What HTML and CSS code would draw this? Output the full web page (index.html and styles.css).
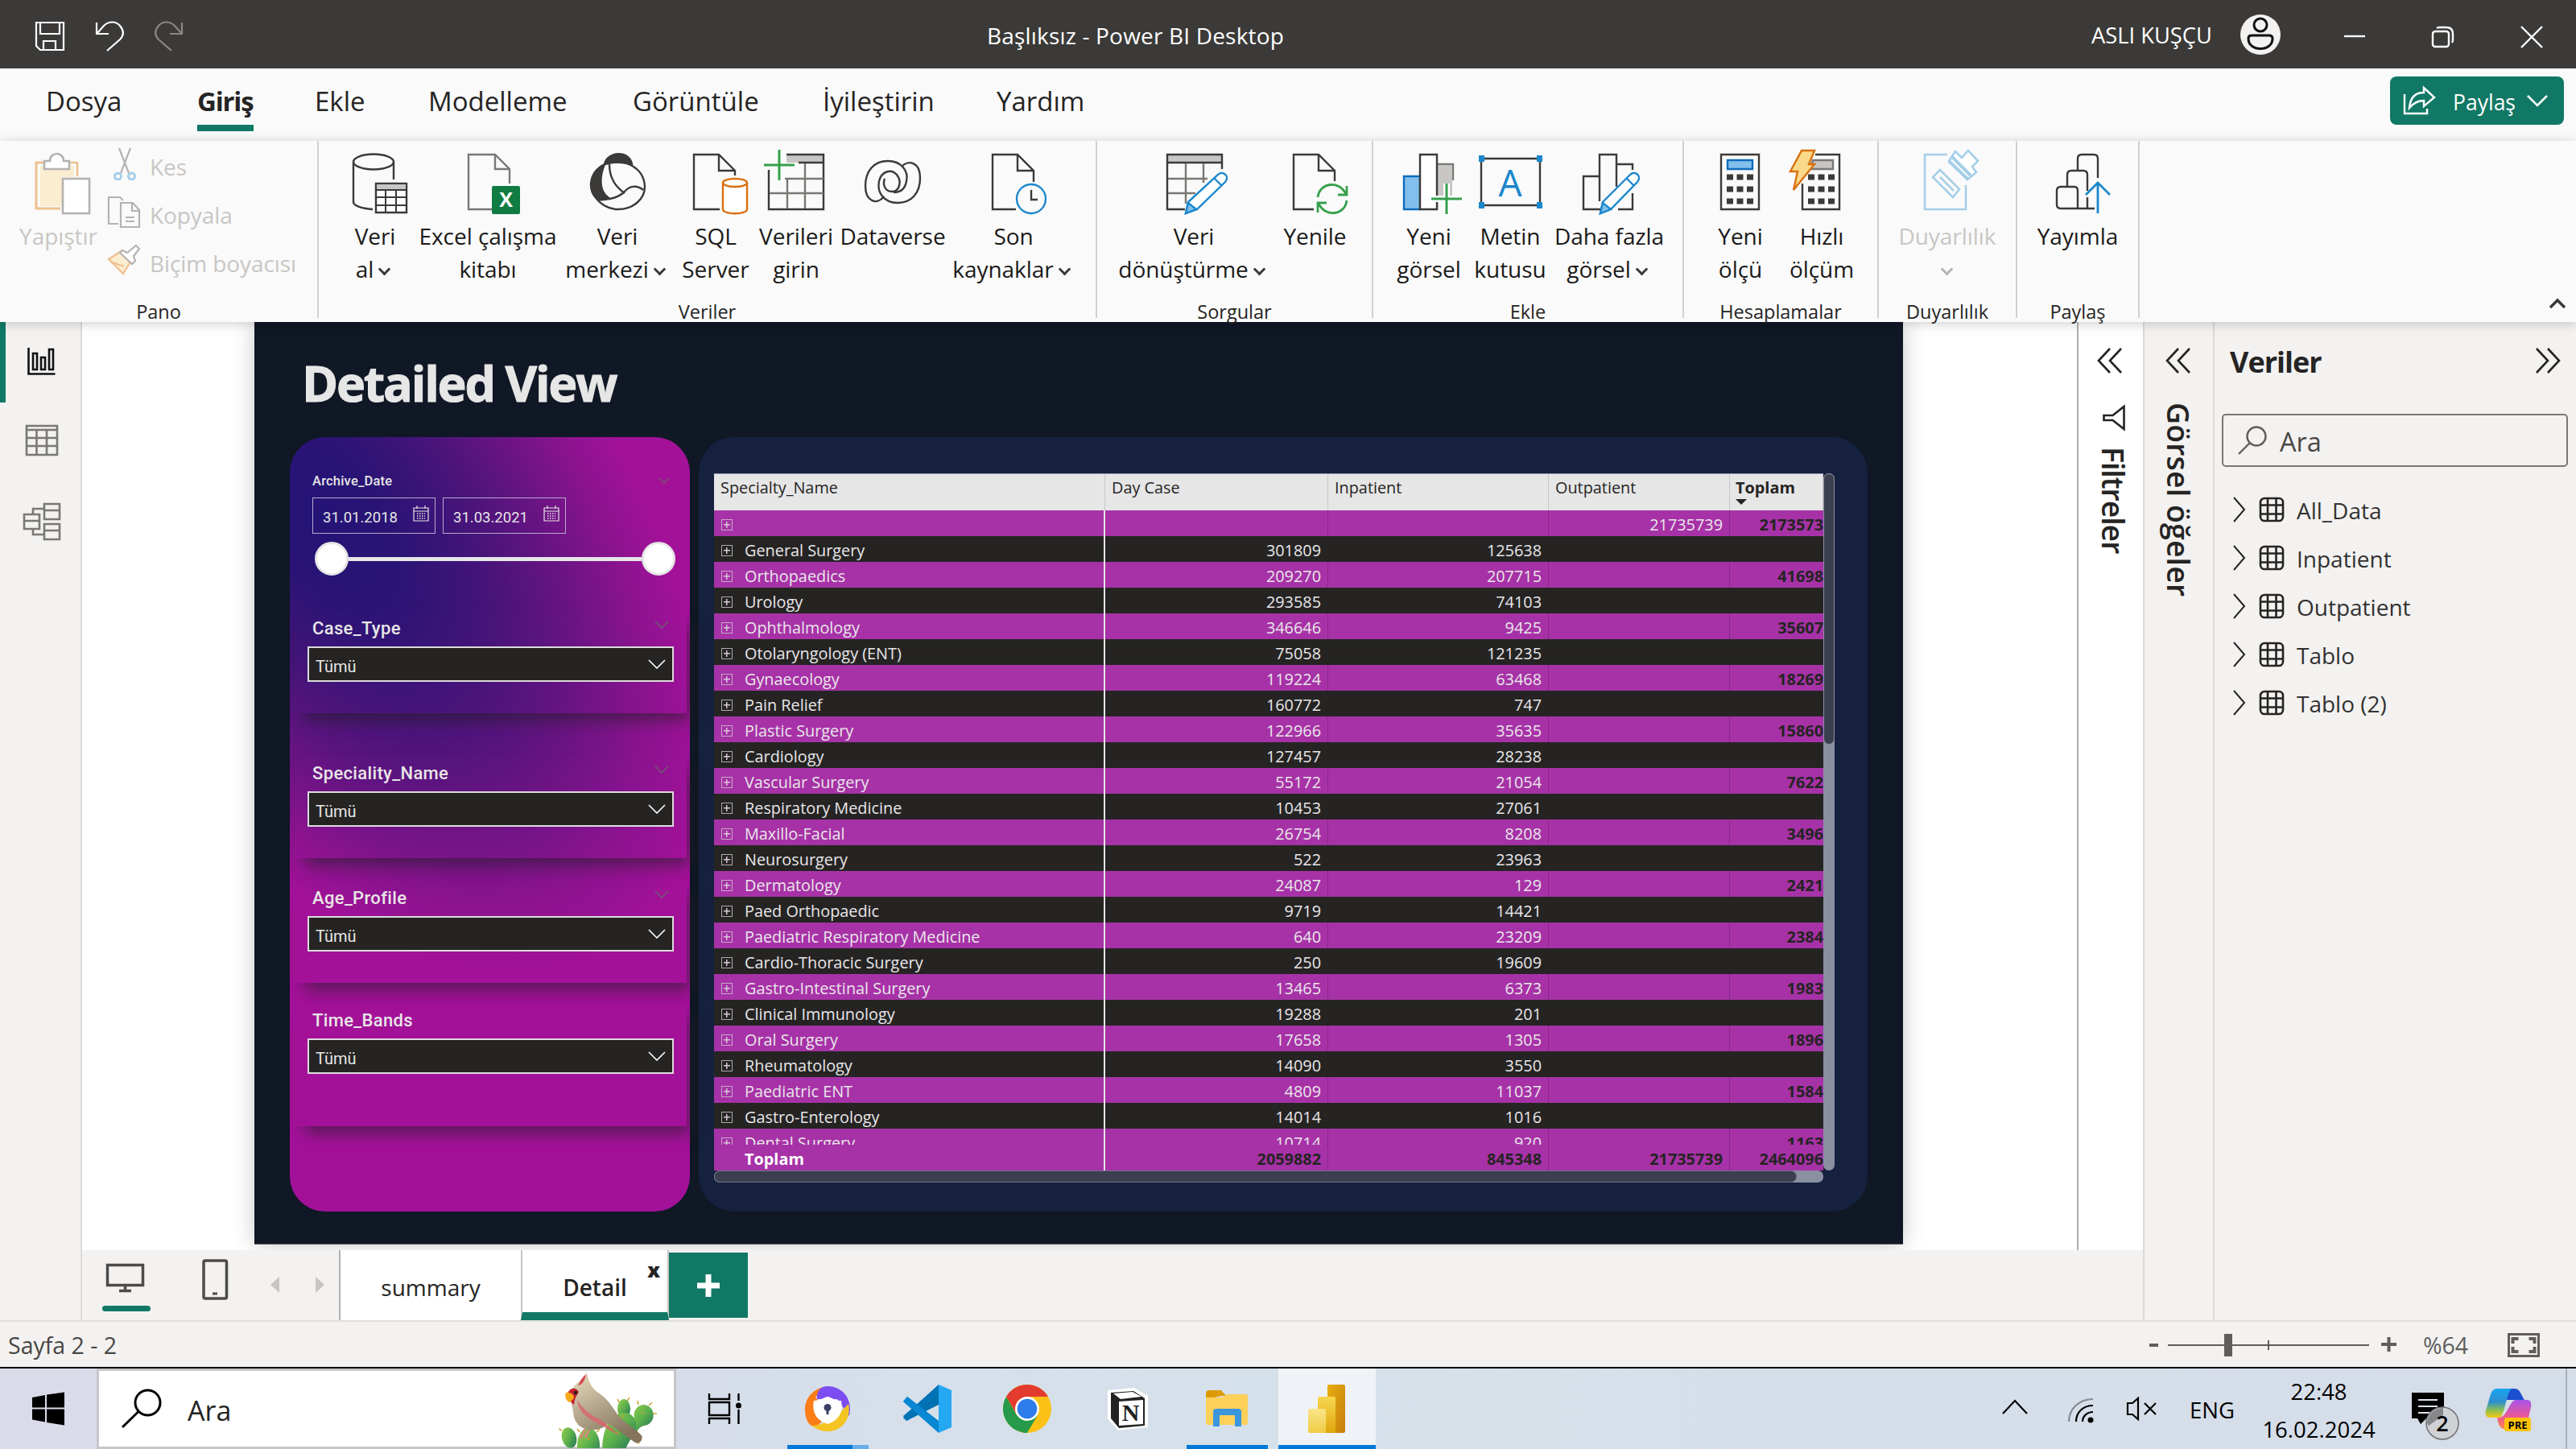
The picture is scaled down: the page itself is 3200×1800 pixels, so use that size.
FILE: index.html
```html
<!DOCTYPE html>
<html lang="tr">
<head>
<meta charset="utf-8">
<title>Başlıksız - Power BI Desktop</title>
<link rel="stylesheet" href="styles.css">
</head>
<body>
<header class="titlebar">
  <svg class="quick" width="250" height="85" viewBox="0 0 250 85" fill="none" stroke="#fff" stroke-width="2.2">
    <path d="M45 28h34v34H50l-5-5zM50 28v14h24V28M54 62V51h15v11M58 51"/>
    <path d="M120 28v14h15M121 41l8-9c6-6 15-6 20 0s5 12 0 17l-16 14"/>
    <path stroke="#8a8886" d="M226 28v14h-15M225 41l-8-9c-6-6-15-6-20 0s-5 12 0 17l16 14"/>
  </svg>
  <div class="doc">Başlıksız - Power BI Desktop</div>
  <div class="user">ASLI KUŞÇU</div>
  <svg class="wincontrols" width="420" height="85" viewBox="2780 0 420 85" fill="none" stroke="#fff" stroke-width="2.4">
    <circle cx="2808" cy="43" r="25" fill="#f3f2f1" stroke="none"/>
    <g stroke="#111" stroke-width="3"><circle cx="2808" cy="31" r="8"/><path d="M2797 44h22q4 0 4 4c0 8-7 12.500-15 12.500s-15-4.500-15-12.500q0-4 4-4z"/></g>
    <path d="M2912 45h26"/><rect x="3022" y="39" width="20" height="19" rx="3"/><path d="M3027 35q1-1 4-1h8q8 0 8 8v7q0 3-1 4"/><path d="M3132 33l26 26M3158 33l-26 26"/>
  </svg>
</header>

<nav class="menu">
  <span class="m1">Dosya</span><span class="m2 on">Giriş</span><span class="m3">Ekle</span><span class="m4">Modelleme</span><span class="m5">Görüntüle</span><span class="m6">İyileştirin</span><span class="m7">Yardım</span>
  <button class="share">
    <svg width="48" height="40" viewBox="2981 103 48 40" fill="none" stroke="#fff" stroke-width="2.400"><path d="M2987 115v24h28v-6M2993 132c1-12 7-19 18-19v-6l13 12-13 11v-7c-8 0-13 3-18 9z"/></svg>
    <span>Paylaş</span>
    <svg width="26" height="16" viewBox="0 0 26 16" fill="none" stroke="#fff" stroke-width="2.600"><path d="M1 2l12 12L25 2"/></svg>
  </button>
</nav>

<section class="ribbon">
  <div class="group g-pano">
    <div class="tools">
      <div class="cmd off paste">
        <svg width="105" height="92" viewBox="20 180 105 92" fill="none" stroke-width="2.600"><path d="M50 206h42v14H77v36H50z" fill="#faedd0"/><path d="M55 202H45v57h30" stroke="#f0c08e" stroke-width="3"/><path d="M86 202h10v17" stroke="#f0c08e"/><path d="M55 210v-10h7c0-12 17-12 17 0h7v10z" fill="#fff" stroke="#b5b3b1"/><rect x="78" y="222" width="33" height="43" fill="#fff" stroke="#b5b3b1"/></svg>
        <span>Yapıştır</span>
      </div>
      <div class="clip">
        <div><svg width="54" height="44" viewBox="124 180 54 44" fill="none" stroke="#b5b3b1" stroke-width="2.200"><path d="M147 184l12 31M161 184l-12 31"/><g stroke="#a5cfe8" stroke-width="3"><circle cx="145.500" cy="219" r="4"/><circle cx="162.500" cy="219" r="4"/></g></svg>Kes</div>
        <div><svg width="54" height="44" viewBox="125 241 54 44" fill="none" stroke="#b5b3b1" stroke-width="2.200"><path d="M147 279h-12v-33h14l4 4M150 253h15l8 9v21h-23zM164 253v10h9M156 271h11M156 276h11"/></svg>Kopyala</div>
        <div><svg width="54" height="44" viewBox="125 301 54 44" fill="none" stroke="#b5b3b1" stroke-width="2.200"><path d="M152 312l-17 11 18 18 11-18" fill="#faedd0" stroke="#f0c08e"/><path d="M137 326l17 6" stroke="#f0c08e"/><path d="M152 312l6 3 11-9 4 4-7 9 2 6-4 4-15-14z" fill="#fff"/></svg>Biçim boyacısı</div>
      </div>
    </div>
    <div class="glabel">Pano</div>
  </div>

  <div class="group g-veri">
    <div class="tools">
      <div class="cmd w100"><svg width="100" height="92" viewBox="416 180 100 92" fill="none" stroke="#3b3a39" stroke-width="2.400"><ellipse cx="464" cy="201" rx="25" ry="9.500"/><path d="M439 201v50c0 4 9 8 24 9M489 201v22"/><path d="M467 228h38v36h-38z" fill="#fff"/><path d="M468 229h36v6h-36z" fill="#c8c6c4" stroke="none"/><path d="M467 236h38M479 236v28M492 236v28M467 245h38M467 255h38" stroke-width="2"/></svg><span>Veri<br>al<i></i></span></div>
      <div class="cmd w180"><svg width="180" height="92" viewBox="516 180 180 92" fill="none" stroke="#7a7874" stroke-width="2.400"><path d="M611 260h-29v-68h33l18 18v18M615 192v18h18"/><rect x="611" y="231" width="35" height="35" rx="2" fill="#107c41" stroke="none"/><text x="628.500" y="257" text-anchor="middle" class="xl">X</text></svg><span>Excel çalışma<br>kitabı</span></div>
      <div class="cmd w142"><svg width="142" height="92" viewBox="696 180 142 92" fill="none" stroke="#3b3a39" stroke-width="2.400"><path d="M751 204c3-16 31-18 34 0-10-2-21-4-34 0zM751 204c-20 10-22 34-8 44 6 1 10 0 13-2-14-10-10-30-5-42z" fill="#3b3a39"/><path d="M751 204c22-9 49 3 50 28 0 14-13 28-33 28-13 0-25-8-30-18M757 204c0 18 8 28 19 36M743 247c14 2 25-2 32-8 6-8 16-10 24-3"/></svg><span>Veri<br>merkezi<i></i></span></div>
      <div class="cmd w102"><svg width="102" height="92" viewBox="838 180 102 92" fill="none" stroke="#3b3a39" stroke-width="2.400"><path d="M894 260h-32v-68h31l20 20v6M893 192v20h20"/><g stroke="#d8700f" fill="#fff"><path d="M898 227v33c0 7 30 7 30 0v-33"/><ellipse cx="913" cy="227" rx="15" ry="5"/></g></svg><span>SQL<br>Server</span></div>
      <div class="cmd w98"><svg width="98" height="92" viewBox="940 180 98 92" fill="none" stroke="#3b3a39" stroke-width="2.400"><path d="M977 192h46v10h-46z" fill="#c8c6c4" stroke="none"/><path d="M977 192h46v68h-68v-49M992 202h31"/><path stroke="#7a7874" d="M978 223v36M1000 203v56M975 222h48M956 240h67"/><path d="M968 186v38M949 205h38" stroke="#35a04c" stroke-width="3"/></svg><span>Verileri<br>girin</span></div>
      <div class="cmd w142"><svg width="142" height="92" viewBox="1038 180 142 92" fill="none" stroke="#3b3a39" stroke-width="2.400"><path d="M1120 207c8-9 23-6 23 14 0 18-10 31-28 31-17 0-26-13-23-27 3-12 15-16 22-8 7 9 3 21-6 21-8 0-12-8-9-16"/><path d="M1098 244c-8 11-23 7-23-13 0-18 10-31 28-31 17 0 26 13 23 25-2 12-10 14-16 14"/></svg><span>Dataverse</span></div>
      <div class="cmd w158"><svg width="158" height="92" viewBox="1180 180 158 92" fill="none" stroke="#3b3a39" stroke-width="2.400"><path d="M1262 260h-29v-68h31l20 20v14M1264 192v20h20"/><circle cx="1281" cy="247" r="18" stroke="#1b87cc"/><path d="M1281 236v12h8"/></svg><span>Son<br>kaynaklar<i></i></span></div>
    </div>
    <div class="glabel">Veriler</div>
  </div>

  <div class="group g-sorgu">
    <div class="tools">
      <div class="cmd w200"><svg width="200" height="92" viewBox="1383 180 200 92" fill="none" stroke="#3b3a39" stroke-width="2.400"><path d="M1450 192h68v10h-68z" fill="#c8c6c4"/><path d="M1450 202v58h22M1518 202v8"/><path stroke="#7a7874" d="M1473 203v50M1495 203v24M1451 222h49M1451 240h34"/><path d="M1473 265l3-14 37-34c6-6 15 2 9 9l-35 34z" fill="#fff" stroke="#1b87cc"/><path d="M1473 265l3-13 10 8zM1508 221l9 9" stroke="#1b87cc" fill="#83bfec"/></svg><span>Veri<br>dönüştürme<i></i></span></div>
      <div class="cmd w101"><svg width="101" height="92" viewBox="1583 180 101 92" fill="none" stroke="#3b3a39" stroke-width="2.400"><path d="M1632 260h-25v-68h31l20 20v13M1638 192v20h20"/><path d="M1637 245c2-18 26-22 35-4M1673 231v11h-11M1673 249c-2 18-26 22-35 4M1637 264v-12h11" stroke="#35a04c" stroke-width="2.800"/></svg><span>Yenile</span></div>
    </div>
    <div class="glabel">Sorgular</div>
  </div>

  <div class="group g-ekle">
    <div class="tools">
      <div class="cmd w104"><svg width="104" height="92" viewBox="1723 180 104 92" fill="none" stroke="#3b3a39" stroke-width="2.400"><path d="M1744 219h20v41h-20z" fill="#83bfec" stroke="#0f6cbd"/><path d="M1785 204h20v20M1785 204v56" fill="#c8c6c4" stroke="#7a7874"/><path d="M1786 205h18v38h-18z" fill="#c8c6c4" stroke="none"/><path d="M1764 192h21v68h-21z" fill="#fff"/><path d="M1797 228v38M1778 247h38" stroke="#fff" stroke-width="8"/><path d="M1797 228v38M1778 247h38" stroke="#35a04c" stroke-width="3"/></svg><span>Yeni<br>görsel</span></div>
      <div class="cmd w98"><svg width="98" height="92" viewBox="1827 180 98 92" fill="none" stroke="#3b3a39" stroke-width="2.400"><path d="M1840 197h73v58h-73z"/><path d="M1837 193h7v8h-7zM1909 193h7v8h-7zM1837 251h7v8h-7zM1909 251h7v8h-7z" fill="#1b87cc" stroke="none"/><text x="1876" y="244" text-anchor="middle" class="letterA">A</text></svg><span>Metin<br>kutusu</span></div>
      <div class="cmd w148"><svg width="148" height="92" viewBox="1925 180 148 92" fill="none" stroke="#3b3a39" stroke-width="2.400"><path d="M1990 260h-23v-41h20M1987 250v-58h21v40M2008 204h20v7M2028 240v20h-18"/><path d="M1988 265l3-14 34-34c6-6 15 2 9 9l-33 34z" fill="#fff" stroke="#1b87cc"/><path d="M1988 265l3-13 10 8zM2020 221l9 9" stroke="#1b87cc" fill="#83bfec"/></svg><span>Daha fazla<br>görsel<i></i></span></div>
    </div>
    <div class="glabel">Ekle</div>
  </div>

  <div class="group g-hesap">
    <div class="tools">
      <div class="cmd w100"><svg width="100" height="92" viewBox="2112 180 100 92" fill="none" stroke="#3b3a39" stroke-width="2.400"><path d="M2138 192h47v68h-47z"/><path d="M2146 199h31v11h-31z" fill="#83bfec" stroke="#0f6cbd"/><path d="M2145 220h34M2145 235h34M2145 250h34" stroke-width="7" stroke-dasharray="8 4.500"/></svg><span>Yeni<br>ölçü</span></div>
      <div class="cmd w102"><svg width="102" height="92" viewBox="2212 180 102 92" fill="none" stroke="#3b3a39" stroke-width="2.400"><path d="M2255 192h30v68h-46v-32"/><path d="M2252 199h25v11h-28z" fill="#c8c6c4" stroke="#7a7874"/><path d="M2246 220h34M2246 235h34M2246 250h34" stroke-width="7" stroke-dasharray="8 4.500"/><path d="M2238 187h16l-7 17h7l-26 32 5-23h-9z" fill="#fbd98b" stroke="#d8700f"/></svg><span>Hızlı<br>ölçüm</span></div>
    </div>
    <div class="glabel">Hesaplamalar</div>
  </div>

  <div class="group g-duy">
    <div class="tools">
      <div class="cmd off w170"><svg width="170" height="92" viewBox="2336 180 170 92" fill="none" stroke="#a5cfe8" stroke-width="2.600"><path d="M2421 192h-28v68h51v-30"/><path d="M2412 211l24 24-8 10-25-25zM2412 220l17 17"/><path d="M2423 200l8-12 8 8 8-9 12 13-7 7 5 7-11 9z" fill="#fff"/><path d="M2423 200l24 23M2427 195l23 23" stroke-width="4"/></svg><span>Duyarlılık<br><i></i></span></div>
    </div>
    <div class="glabel">Duyarlılık</div>
  </div>

  <div class="group g-pay">
    <div class="tools">
      <div class="cmd w150"><svg width="150" height="92" viewBox="2506 180 150 92" fill="none" stroke="#3b3a39" stroke-width="2.400"><path d="M2602 259h-42q-5 0-5-5v-17q0-5 5-5h17q4 0 4 5v22M2568 232v-15q0-5 5-5h15q5 0 5 5v20M2593 245v14M2581 211v-14q0-5 5-5h15q5 0 5 5v24"/><path d="M2606 265v-36M2591 242l15-15 15 15" stroke="#1b87cc" stroke-width="2.800"/></svg><span>Yayımla</span></div>
    </div>
    <div class="glabel">Paylaş</div>
  </div>
  <svg class="collapse" width="24" height="16" viewBox="0 0 24 16" fill="none" stroke="#3b3a39" stroke-width="3.500"><path d="M3 13l9-9 9 9"/></svg>
</section>

<main class="work">
  <aside class="rail">
    <svg width="101" height="290" viewBox="0 400 101 290" fill="none" stroke="#7a7874" stroke-width="2.600">
      <path d="M0 400h7v100H0z" fill="#117865" stroke="none"/>
      <g stroke="#111"><path d="M35.500 432v32.500h33"/><path d="M41 439h5v20h-5zM51 444h5v15h-5zM61 434h5v25h-5z"/></g>
      <path d="M33 529h38v36H33zM33 534h38M33 544h38M33 554h38M45.500 534v31M58 534v31"/>
      <path d="M55 626h19v19H55zM55 634h19M55 651h19v19H55zM55 659h19M30 639h19v18H30zM30 647h19M41 639v-7h14M41 657v7h14"/>
    </svg>
  </aside>

  <div class="center">
    <div class="upper">
      <div class="canvas">
        <div class="report">
          <h1>Detailed View</h1>
          <div class="panels">
            <div class="filters">
              <svg class="glow" width="497" height="962" viewBox="0 0 497 962">
                <defs><radialGradient id="glow" gradientUnits="userSpaceOnUse" cx="0" cy="0" r="1" gradientTransform="translate(40 97) rotate(-35) scale(360 650)"><stop offset="0" stop-color="#241476"/><stop offset=".2" stop-color="#2a1475"/><stop offset=".45" stop-color="#48147a"/><stop offset=".65" stop-color="#681483"/><stop offset=".85" stop-color="#8c1390"/><stop offset="1" stop-color="#a31199"/></radialGradient></defs>
                <rect width="497" height="962" rx="44" fill="url(#glow)"/>
              </svg>
              <div class="datebox">
                <div class="dhead"><span>Archive_Date</span><svg width="14" height="8" viewBox="0 0 14 8"><path d="M1 1l6 6 6-6" fill="none" stroke="#6b5f6b" stroke-width="1.400"/></svg></div>
                <div class="dates">
                  <div class="date"><span>31.01.2018</span><svg width="20" height="20" viewBox="0 0 20 20"><path d="M1 3h18v16H1zM1 7h18M5 0v4M15 0v4" fill="none" stroke="#e6e6e6" stroke-width="1.200"/><path d="M5 10h10M5 13h10M5 16h10" stroke="#e6e6e6" stroke-width="1.500" stroke-dasharray="1.500 1.500"/></svg></div>
                  <div class="date"><span>31.03.2021</span><svg width="20" height="20" viewBox="0 0 20 20"><path d="M1 3h18v16H1zM1 7h18M5 0v4M15 0v4" fill="none" stroke="#e6e6e6" stroke-width="1.200"/><path d="M5 10h10M5 13h10M5 16h10" stroke="#e6e6e6" stroke-width="1.500" stroke-dasharray="1.500 1.500"/></svg></div>
                </div>
                <div class="slider"><b></b><u></u><b></b></div>
              </div>
              <div class="slicer s1"><div class="shead"><span>Case_Type</span><svg width="18" height="10" viewBox="0 0 18 10"><path d="M1 1l8 8 8-8" fill="none" stroke="#6b5f6b" stroke-width="1.400"/></svg></div><div class="drop">Tümü<svg width="22" height="12" viewBox="0 0 22 12"><path d="M1 1l10 10L21 1" fill="none" stroke="#fff" stroke-width="1.600"/></svg></div></div>
              <div class="slicer s2"><div class="shead"><span>Speciality_Name</span><svg width="18" height="10" viewBox="0 0 18 10"><path d="M1 1l8 8 8-8" fill="none" stroke="#6b5f6b" stroke-width="1.400"/></svg></div><div class="drop">Tümü<svg width="22" height="12" viewBox="0 0 22 12"><path d="M1 1l10 10L21 1" fill="none" stroke="#fff" stroke-width="1.600"/></svg></div></div>
              <div class="slicer s3"><div class="shead"><span>Age_Profile</span><svg width="18" height="10" viewBox="0 0 18 10"><path d="M1 1l8 8 8-8" fill="none" stroke="#6b5f6b" stroke-width="1.400"/></svg></div><div class="drop">Tümü<svg width="22" height="12" viewBox="0 0 22 12"><path d="M1 1l10 10L21 1" fill="none" stroke="#fff" stroke-width="1.600"/></svg></div></div>
              <div class="slicer s4"><div class="shead"><span>Time_Bands</span></div><div class="drop">Tümü<svg width="22" height="12" viewBox="0 0 22 12"><path d="M1 1l10 10L21 1" fill="none" stroke="#fff" stroke-width="1.600"/></svg></div></div>
            </div>

            <div class="tablecard">
              <div class="matrixrow">
                <div class="matrix">
                  <div class="row head"><span>Specialty_Name</span><span>Day Case</span><span>Inpatient</span><span>Outpatient</span><span class="sorted">Toplam</span></div>
                  <div class="rows">
                    <div class="row"><span><i></i></span><span></span><span></span><span>21735739</span><span>2173573</span></div>
                    <div class="row"><span><i></i>General Surgery</span><span>301809</span><span>125638</span><span></span><span></span></div>
                    <div class="row"><span><i></i>Orthopaedics</span><span>209270</span><span>207715</span><span></span><span>41698</span></div>
                    <div class="row"><span><i></i>Urology</span><span>293585</span><span>74103</span><span></span><span></span></div>
                    <div class="row"><span><i></i>Ophthalmology</span><span>346646</span><span>9425</span><span></span><span>35607</span></div>
                    <div class="row"><span><i></i>Otolaryngology (ENT)</span><span>75058</span><span>121235</span><span></span><span></span></div>
                    <div class="row"><span><i></i>Gynaecology</span><span>119224</span><span>63468</span><span></span><span>18269</span></div>
                    <div class="row"><span><i></i>Pain Relief</span><span>160772</span><span>747</span><span></span><span></span></div>
                    <div class="row"><span><i></i>Plastic Surgery</span><span>122966</span><span>35635</span><span></span><span>15860</span></div>
                    <div class="row"><span><i></i>Cardiology</span><span>127457</span><span>28238</span><span></span><span></span></div>
                    <div class="row"><span><i></i>Vascular Surgery</span><span>55172</span><span>21054</span><span></span><span>7622</span></div>
                    <div class="row"><span><i></i>Respiratory Medicine</span><span>10453</span><span>27061</span><span></span><span></span></div>
                    <div class="row"><span><i></i>Maxillo-Facial</span><span>26754</span><span>8208</span><span></span><span>3496</span></div>
                    <div class="row"><span><i></i>Neurosurgery</span><span>522</span><span>23963</span><span></span><span></span></div>
                    <div class="row"><span><i></i>Dermatology</span><span>24087</span><span>129</span><span></span><span>2421</span></div>
                    <div class="row"><span><i></i>Paed Orthopaedic</span><span>9719</span><span>14421</span><span></span><span></span></div>
                    <div class="row"><span><i></i>Paediatric Respiratory Medicine</span><span>640</span><span>23209</span><span></span><span>2384</span></div>
                    <div class="row"><span><i></i>Cardio-Thoracic Surgery</span><span>250</span><span>19609</span><span></span><span></span></div>
                    <div class="row"><span><i></i>Gastro-Intestinal Surgery</span><span>13465</span><span>6373</span><span></span><span>1983</span></div>
                    <div class="row"><span><i></i>Clinical Immunology</span><span>19288</span><span>201</span><span></span><span></span></div>
                    <div class="row"><span><i></i>Oral Surgery</span><span>17658</span><span>1305</span><span></span><span>1896</span></div>
                    <div class="row"><span><i></i>Rheumatology</span><span>14090</span><span>3550</span><span></span><span></span></div>
                    <div class="row"><span><i></i>Paediatric ENT</span><span>4809</span><span>11037</span><span></span><span>1584</span></div>
                    <div class="row"><span><i></i>Gastro-Enterology</span><span>14014</span><span>1016</span><span></span><span></span></div>
                    <div class="row"><span><i></i>Dental Surgery</span><span>10714</span><span>920</span><span></span><span>1163</span></div>
                  </div>
                  <div class="row total"><span>Toplam</span><span>2059882</span><span>845348</span><span>21735739</span><span>2464096</span></div>
                </div>
                <div class="vbar"><b></b></div>
              </div>
              <div class="hbar"><b></b></div>
            </div>
          </div>
        </div>
      </div>
      <aside class="filterpane">
        <svg width="80" height="150" viewBox="2582 400 80 150" fill="none" stroke="#252423" stroke-width="2.600"><path d="M2621 433l-14 15 14 15M2635 433l-14 15 14 15"/><path d="M2638.500 505v28l-14-11h-11v-6h11z"/></svg>
        <span>Filtreler</span>
      </aside>
    </div>
    <div class="pages">
      <svg width="319" height="87" viewBox="102 1553 319 87" fill="none" stroke="#4d4b49" stroke-width="3.500">
        <path d="M133.500 1571.500h44v25h-44z"/><path d="M155.500 1598v5M148 1603.500h15"/><rect x="253" y="1566" width="28.500" height="47" rx="2"/><path d="M264 1607h6" stroke-width="3"/>
        <rect x="127" y="1622" width="60" height="7" rx="3.500" fill="#117865" stroke="none"/>
        <path d="M347 1586v20l-11-10zM392 1586v20l11-10z" fill="#c8c6c4" stroke="none"/>
      </svg>
      <div class="ptab">summary</div>
      <div class="ptab on">Detail<b>x</b></div>
      <div class="padd"><svg width="28" height="28" viewBox="0 0 28 28"><path d="M14 0v28M0 14h28" stroke="#fff" stroke-width="7"/></svg></div>
    </div>
  </div>

  <aside class="vizpane">
    <svg width="85" height="100" viewBox="2664 400 85 100" fill="none" stroke="#252423" stroke-width="2.600"><path d="M2706 433l-14 15 14 15M2720 433l-14 15 14 15"/></svg>
    <span>Görsel öğeler</span>
  </aside>

  <aside class="datapane">
    <div class="dtitle"><span>Veriler</span><svg width="32" height="32" viewBox="0 0 32 32" fill="none" stroke="#252423" stroke-width="2.600"><path d="M2 1l14 15L2 31M16 1l14 15-14 15"/></svg></div>
    <div class="search"><svg width="38" height="38" viewBox="0 0 38 38" fill="none" stroke="#605e5c" stroke-width="2.400"><circle cx="24" cy="14" r="11.500"/><path d="M16 22L2 36"/></svg>Ara</div>
    <div class="field"><svg width="66" height="32" viewBox="0 0 66 32" fill="none" stroke="#252423" stroke-width="2"><path d="M2 1l13 15L2 31"/><g stroke-width="2.600"><rect x="35" y="2" width="28" height="28" rx="5"/><path d="M35 10.500h28M35 21.500h28M44 2v28M54.500 2v28"/></g></svg>All_Data</div>
    <div class="field"><svg width="66" height="32" viewBox="0 0 66 32" fill="none" stroke="#252423" stroke-width="2"><path d="M2 1l13 15L2 31"/><g stroke-width="2.600"><rect x="35" y="2" width="28" height="28" rx="5"/><path d="M35 10.500h28M35 21.500h28M44 2v28M54.500 2v28"/></g></svg>Inpatient</div>
    <div class="field"><svg width="66" height="32" viewBox="0 0 66 32" fill="none" stroke="#252423" stroke-width="2"><path d="M2 1l13 15L2 31"/><g stroke-width="2.600"><rect x="35" y="2" width="28" height="28" rx="5"/><path d="M35 10.500h28M35 21.500h28M44 2v28M54.500 2v28"/></g></svg>Outpatient</div>
    <div class="field"><svg width="66" height="32" viewBox="0 0 66 32" fill="none" stroke="#252423" stroke-width="2"><path d="M2 1l13 15L2 31"/><g stroke-width="2.600"><rect x="35" y="2" width="28" height="28" rx="5"/><path d="M35 10.500h28M35 21.500h28M44 2v28M54.500 2v28"/></g></svg>Tablo</div>
    <div class="field"><svg width="66" height="32" viewBox="0 0 66 32" fill="none" stroke="#252423" stroke-width="2"><path d="M2 1l13 15L2 31"/><g stroke-width="2.600"><rect x="35" y="2" width="28" height="28" rx="5"/><path d="M35 10.500h28M35 21.500h28M44 2v28M54.500 2v28"/></g></svg>Tablo (2)</div>
  </aside>
</main>

<footer class="status">
  <span>Sayfa 2 - 2</span>
  <svg width="320" height="56" viewBox="2665 1642 320 56" fill="none" stroke="#605e5c"><path d="M2670 1671h11" stroke-width="4"/><path d="M2693 1671h250" stroke-width="2"/><path d="M2768 1657v28" stroke-width="10"/><path d="M2818 1665v12" stroke-width="2"/><path d="M2958 1670h19M2967.500 1661v18" stroke-width="4"/></svg>
  <span class="pct">%64</span>
  <svg width="41" height="56" viewBox="3115 1642 41 56" fill="none" stroke="#605e5c" stroke-width="3"><path d="M3116.500 1657.500h37v27h-37z"/><path d="M3121.500 1669v-6h7M3141.500 1663h7v6M3121.500 1673v6h7M3141.500 1679h7v-6" stroke-width="4"/></svg>
</footer>

<footer class="taskbar">
  <svg class="start" width="120" height="100" viewBox="0 1700 120 100"><path d="M40 1736l16-3v15.500H40zM58 1732.500l22-3v19H58zM40 1750.500h16v16l-16-3zM58 1750.500h22v20l-22-3.500z"/></svg>
  <div class="find">
    <svg width="52" height="52" viewBox="150 1724 52 52" fill="none" stroke="#000" stroke-width="3"><circle cx="183.500" cy="1742.500" r="15.500"/><path d="M172.500 1753L152 1773"/></svg>
    <span>Ara</span>
    <svg class="bird" width="122" height="97" viewBox="694 1703 122 97">
      <defs>
        <linearGradient id="cactus" x1="0" y1="0" x2="1" y2="1"><stop offset="0" stop-color="#9ad14c"/><stop offset=".5" stop-color="#5bb04c"/><stop offset="1" stop-color="#1c6d5c"/></linearGradient>
        <linearGradient id="feather" x1="0" y1="0" x2=".6" y2="1"><stop offset="0" stop-color="#ecdfbe"/><stop offset=".5" stop-color="#b5a88f"/><stop offset="1" stop-color="#85735c"/></linearGradient>
      </defs>
      <g fill="url(#cactus)"><ellipse cx="775" cy="1751" rx="8" ry="12"/><path d="M782 1776c-2-8 2-12 6-14a12 13 0 1 1 12 10c-4 1-8 4-9 9z"/><path d="M748 1803c0-24 8-45 26-47 15-1 19 14 14 26-6 9-9 14-12 22z"/><ellipse cx="707" cy="1787" rx="9" ry="13" transform="rotate(-15 707 1787)"/><ellipse cx="731" cy="1796" rx="14" ry="21"/></g>
      <path d="M769 1743l-2-4M779 1741l3-4M793 1746l-1-5M806 1747l4-4M811 1757h5M698 1778l-4-2M720 1780l-3-4M741 1780l4-4M756 1770l-4-3M790 1792l4 2M772 1762l3-3M730 1790l2-3M766 1782l3-2M797 1757l3-2" stroke="#c9a13a" stroke-width="1.500"/>
      <path d="M729 1706c-3 8-16 13-20 24-2 9 2 16 3 25 1 14 9 21 21 22 10 1 17-2 22-8l34 24c6 2 10-3 8-9-9-9-21-15-30-26-8-12-13-20-24-27-9-6-12-15-14-25z" fill="url(#feather)"/>
      <path d="M728 1708c-5 4-8 10-10 14 5 0 9-7 10-14z" fill="#d34a56"/><path d="M706 1730c4-6 10-5 13 0-2 4-5 7-6 16-5-3-8-10-7-16z" fill="#c8202f"/><path d="M703 1731c5-1 10 2 10 6-1 3-4 5-6 6-4-2-6-8-4-12z" fill="#f7a91c"/><circle cx="715" cy="1731" r="2.200" fill="#222"/>
      <path d="M717 1740c6 10 14 17 26 23 10 6 18 12 27 22-12-7-21-12-30-17-13-7-22-15-23-28z" fill="#d9656b" opacity=".8"/><path d="M727 1776l-6 12M732 1777l-5 10" stroke="#cf8a7c" stroke-width="3"/>
    </svg>
  </div>
  <svg class="apps" width="900" height="100" viewBox="840 1700 900 100">
    <defs>
      <linearGradient id="pb1" x1="0" y1="0" x2="1" y2="1"><stop offset="0" stop-color="#e6ad10"/><stop offset="1" stop-color="#c87e0e"/></linearGradient>
      <linearGradient id="pb2" x1="0" y1="0" x2="0" y2="1"><stop offset="0" stop-color="#f6d751"/><stop offset="1" stop-color="#e0a60c"/></linearGradient>
      <linearGradient id="pb3" x1="0" y1="0" x2="0" y2="1"><stop offset="0" stop-color="#f9e589"/><stop offset="1" stop-color="#f0cb45"/></linearGradient>
    </defs>
    <g fill="none" stroke="#000" stroke-width="2.400"><path d="M881 1731v7h25v-7M881 1769v-7h25v7M881 1742h25v16h-25zM917.500 1731v9M917.500 1751v18"/></g><circle cx="917.500" cy="1746" r="3.500"/>
    <path d="M978 1795h81v5h-81z" fill="#0078d7"/><path d="M1059 1795h20v5h-20z" fill="#68ade8"/>
    <path d="M1023 1723c-17 4-24 18-23 30 1 14 7 20 14 19l18-16-19-20z" fill="#fb7d18"/><path d="M1015 1738c-1-8 3-16 13-16 16 0 28 12 28 28 0 4-1 7-1 9l-15-21z" fill="#7c4df0"/><path d="M1054 1744c4 18-8 34-26 34-8 0-15-3-20-7 16 0 32-12 46-27z" fill="#f4c423"/>
    <path d="M1011 1740c8 0 14-5 17-5s9 5 17 5c3 14-3 25-17 29-14-4-20-16-17-29z" fill="#fff"/><circle cx="1028" cy="1748.500" r="4.500" fill="#3a4264"/><path d="M1026.500 1750h3v7h-3z" fill="#3a4264"/>
    <path d="M1166 1720v25l-40 20-4-4 3-4z" fill="#0070b0"/><path d="M1122 1741l5-6 39 30v15z" fill="#0086d4"/><path d="M1122 1759l5 6 40-35v-9z" fill="#0073b7"/><path d="M1122 1741l5-6 40 32v12z" fill="#0a87d3"/><path d="M1166 1720l16 7v46l-16 7z" fill="#24a8f2"/>
    <circle cx="1276" cy="1750" r="30" fill="#fbc116"/><path d="M1250 1735a30 30 0 0 1 52 0h-26l-13 22z" fill="#e33b2e"/><path d="M1250 1735a30 30 0 0 0 26 45l13-22-26 0z" fill="#26994a"/><circle cx="1276" cy="1750" r="15" fill="#fff"/><circle cx="1276" cy="1750" r="12.300" fill="#2f7cec"/>
    <path d="M1378 1729l30-3 16 9v36l-34 4-12-13z" fill="#fff" stroke="#fff" stroke-width="4"/><path d="M1380 1730l28-2 14 9v34l-32 3-10-12z" fill="#222"/><path d="M1383 1731l24-2 11 6-26 3zM1390 1741l30-2v30l-30 2z" fill="#fff"/><text x="1404.500" y="1765" text-anchor="middle" class="notion">N</text>
    <path d="M1498 1731q0-4 4-4h15l6 7h-5l-20 4z" fill="#dc9b05"/><path d="M1498 1736h20l6-4h24q2 0 2 2v33q0 3-2 3h-48q-2 0-2-3z" fill="#fdd05a"/><path d="M1507 1772v-18q0-4 4-4h27q4 0 4 4v18h-8v-14h-19v14z" fill="#3a96dd"/>
    <path d="M1474 1795h101v5h-101z" fill="#0078d7"/>
    <path d="M1588 1700h121v95h-121z" fill="#eff3f8"/><path d="M1588 1795h121v5h-121z" fill="#0078d7"/>
    <rect x="1649" y="1720" width="22" height="60" rx="2" fill="url(#pb1)"/><rect x="1637" y="1735" width="22" height="45" rx="2" fill="url(#pb2)"/><rect x="1625" y="1750" width="22" height="30" rx="2" fill="url(#pb3)"/>
  </svg>
  <svg class="tray" width="220" height="100" viewBox="2480 1700 220 100" fill="none" stroke="#000" stroke-width="2.200"><path d="M2488 1756l15-16 15 16"/><path d="M2570 1766c0-16 13-28 30-28" stroke="#868b93"/><path d="M2579 1766c0-12 9-20 21-20M2587 1766c0-7 6-12 13-12"/><circle cx="2597" cy="1764" r="3.500" fill="#000" stroke="none"/><path d="M2643 1743h6l7-6v26l-7-6h-6zM2664 1743l14 14M2678 1743l-14 14"/></svg>
  <div class="lang">ENG</div>
  <div class="clock">22:48<br>16.02.2024</div>
  <svg class="corner" width="230" height="100" viewBox="2970 1700 230 100">
    <defs>
      <linearGradient id="cp1" x1="0" y1="0" x2="0" y2="1"><stop offset="0" stop-color="#18a5f0"/><stop offset=".45" stop-color="#2d8fd0"/><stop offset=".75" stop-color="#8fc04e"/><stop offset="1" stop-color="#f8c619"/></linearGradient>
      <linearGradient id="cp2" x1="0" y1="0" x2="0" y2="1"><stop offset="0" stop-color="#a853ea"/><stop offset=".6" stop-color="#ee5a90"/><stop offset="1" stop-color="#fb8a4a"/></linearGradient>
    </defs>
    <path d="M2997 1730h40v32h-22l-7 7-4-7h-7z"/><path d="M3005 1739h24M3005 1747h24M3005 1755h16" stroke="#dce2ea" stroke-width="2.200"/>
    <circle cx="3035" cy="1768" r="20" fill="#cfd1d5" stroke="#6f7072" stroke-width="1.500"/><path d="M3016 1768a20 20 0 0 1 20-19v9l-18 13z" fill="#85878a"/><text x="3035" y="1778" text-anchor="middle" class="count">2</text>
    <path d="M3115 1725h9c8 0 8 7 13 14h-22z" fill="#1b4fd0"/><path d="M3103 1725h18c-6 4-8 30-14 36h-13c-5 0-6-4-5-9l6-20c2-5 4-7 8-7z" fill="url(#cp1)"/><path d="M3125 1739h15c5 0 6 4 5 9l-5 22c-2 4-4 5-8 5h-20c-6 0-8-8-9-14 12 2 14-18 22-22z" fill="url(#cp2)"/>
    <rect x="3112" y="1761" width="33" height="17" rx="3" fill="#fdc30b"/><text x="3128.500" y="1774.500" text-anchor="middle" class="pre">PRE</text>
    <path d="M3189 1700v100" stroke="#a9b0b9" stroke-width="2"/>
  </svg>
</footer>
</body>
</html>
```
FILE: styles.css
```css
* { box-sizing: border-box; }
body {
  margin: 0; width: 3200px; height: 1800px; overflow: hidden;
  font-family: "Open Sans", "Noto Sans", sans-serif; color: #252423; background: #fff;
}
svg { display: block; flex: none; }
i { font-style: normal; }

/* title bar */
.titlebar { height: 85px; display: flex; background: #3b3a38; color: #fff; font-size: 28px; line-height: 88px; white-space: nowrap; }
.quick { margin-right: 976px; }
.doc { width: 1372px; letter-spacing: .18px; }
.user { width: 182px; font-size: 27.300px; line-height: 87px; }

/* menu */
.menu { height: 90px; display: flex; padding-left: 57px; background: #fafafa; font-size: 33px; line-height: 81px; white-space: nowrap; }
.m1 { width: 188px; } .m2 { width: 146px; } .m3 { width: 141px; } .m4 { width: 254px; } .m5 { width: 236px; } .m6 { width: 216px; } .m7 { flex: 1; }
.menu .on { font-weight: 700; letter-spacing: -1.200px; }
.menu .on::after { content: ""; display: block; width: 70px; height: 8px; background: #117865; margin-top: -11px; }
.share { width: 216px; height: 60px; margin: 10px 15px 0 0; border: 0; border-radius: 8px; background: #117865; color: #fff; font: 26.500px/60px "Open Sans", sans-serif; display: flex; align-items: center; padding: 0 0 0 12px; }
.share span { margin: 3px 12px 0 18px; width: 80px; text-align: left; }

/* ribbon */
.ribbon { height: 225px; display: flex; background: #fafafa; position: relative; z-index: 2; box-shadow: 0 2px 14px rgba(0,0,0,.2); }
.group { height: 220px; border-right: 2px solid #d2d0ce; display: flex; flex-direction: column; }
.tools { display: flex; height: 197px; padding-top: 5px; }
.g-pano { width: 396px; } .g-pano .tools { padding-left: 20px; }
.g-veri { width: 967px; } .g-veri .tools { padding-left: 20px; }
.g-sorgu { width: 343px; } .g-sorgu .tools { padding-left: 20px; }
.g-ekle { width: 386px; } .g-ekle .tools { padding-left: 17px; }
.g-hesap { width: 242px; } .g-hesap .tools { padding-left: 20px; }
.g-duy { width: 172px; }
.g-pay { width: 152px; }
.cmd { font-size: 28px; line-height: 41px; text-align: center; white-space: nowrap; flex: none; display: flex; flex-direction: column; align-items: center; color: #1b1a19; letter-spacing: -.05px; }
.cmd > span { margin-top: 1px; }
.off { color: #c8c6c4; }
.paste { width: 105px; }
.w98 { width: 98px; } .w100 { width: 100px; } .w101 { width: 101px; } .w102 { width: 102px; } .w104 { width: 104px; } .w142 { width: 142px; } .w148 { width: 148px; } .w150 { width: 150px; } .w158 { width: 158px; } .w170 { width: 170px; } .w180 { width: 180px; } .w200 { width: 200px; }
.cmd i { display: inline-block; width: 11px; height: 11px; border: solid #3b3a39; border-width: 0 3px 3px 0; transform: rotate(45deg); margin: 0 7px 5px 8px; }
.off i { border-color: #b5b3b1; margin-right: 4px; margin-left: 4px; }
.clip { color: #c8c6c4; font-size: 28px; display: flex; flex-direction: column; letter-spacing: -.1px; }
.clip div { display: flex; height: 60px; line-height: 54px; gap: 7px; white-space: nowrap; }
.glabel { text-align: center; font-size: 23.500px; line-height: 30px; height: 23px; }
.xl { font: 700 25px "Open Sans"; fill: #fff; stroke: none; }
.letterA { font: 46px "Open Sans"; fill: #1b87cc; stroke: none; }
.collapse { margin: 194px 0 0 507px; }

/* work area */
.work { height: 1242px; display: flex; border-bottom: 2px solid #e1dfdd; background: #f3f2f1; }
.rail { width: 102px; border-right: 2px solid #dddbd9; }
.center { width: 2560px; display: flex; flex-direction: column; }
.upper { height: 1153px; display: flex; background: #fff; overflow: hidden; }
.canvas { width: 2478px; padding-left: 214px; }
.report { width: 2048px; height: 1146px; background: #101725; box-shadow: 0 0 26px rgba(0,0,0,.22); padding: 0 0 0 44px; border-bottom: 1px solid #555a66; }
h1 { margin: 0; height: 143px; padding: 23px 0 0 15px; font-size: 61px; line-height: 106px; font-weight: 700; letter-spacing: -2.200px; color: #e6e6e6; -webkit-text-stroke: 1px #e6e6e6; white-space: nowrap; }
.panels { display: flex; gap: 11px; }
.filters { width: 497px; height: 962px; font-family: Roboto, sans-serif; color: #e8e6e6; position: relative; isolation: isolate; }
.glow { position: absolute; inset: 0; z-index: -1; }
.datebox { height: 215px; padding: 45px 25px 0 28px; }
.dhead { display: flex; justify-content: space-between; font-size: 16.500px; line-height: 20px; font-weight: 500; letter-spacing: .2px; }
.dhead svg { margin-top: 5px; }
.dates { display: flex; gap: 9px; padding-top: 10px; }
.date { width: 153px; height: 45px; border: 1.500px solid #b9a9cf; display: flex; justify-content: space-between; align-items: center; padding: 0 7px 0 12px; font-size: 18.500px; }
.date span { padding-top: 4px; } .date svg { margin-top: -5px; }
.slider { display: flex; align-items: center; margin: 10px 0 0 3px; width: 448px; }
.slider b { width: 42px; height: 42px; border-radius: 50%; background: #fff; border: 3px solid #e6e6e6; }
.slider u { flex: 1; height: 5px; background: #e6e6e6; }
.slicer { width: 487px; height: 128px; margin-left: 6px; box-shadow: 8px 14px 18px -5px rgba(38,30,40,.6); }
.s2 { margin-top: 52px; } .s3 { margin-top: 27px; } .s4 { margin-top: 24px; height: 154px; }
.shead { height: 45px; display: flex; justify-content: space-between; padding: 12px 22px 0 22px; font-size: 22px; line-height: 22px; font-weight: 500; letter-spacing: .35px; }
.shead svg { margin-top: 1px; }
.drop { width: 455px; height: 44px; margin-left: 16px; border: 2px solid #dcdcdc; background: #252423; display: flex; justify-content: space-between; align-items: center; padding: 6px 8px 0 8px; font-size: 20px; }
.drop svg { margin-top: -6px; }

.tablecard { width: 1452px; height: 962px; border-radius: 44px; background: #16203f; padding: 45px 0 0 19px; }
.matrixrow { display: flex; }
.matrix { width: 1378px; height: 866px; overflow: hidden; font-size: 19.850px; }
.row { display: grid; grid-template-columns: 486px 277px 274px 225px 116px; height: 32px; line-height: 36px; color: #e9e7e9; }
.row span { height: 32px; text-align: right; padding-right: 8px; white-space: nowrap; border-right: 1px solid rgba(80,20,90,.35); }
.row span:first-child { text-align: left; padding: 0 0 0 9px; border-right: 2px solid #e6e6e6; display: flex; align-items: flex-start; }
.row span:last-child { padding-right: 0; color: #252423; font-weight: 700; border: 0; }
.row i { width: 14px; height: 14px; border: 1.500px solid #c8a8c8; margin: 11px 15px 0 0; background: linear-gradient(#d8c8d8,#d8c8d8) center/8px 1.500px no-repeat, linear-gradient(#d8c8d8,#d8c8d8) center/1.500px 8px no-repeat; }
.rows { height: 788px; overflow: hidden; }
.rows .row:nth-child(odd), .total { background: #a732a7; }
.rows .row:nth-child(even) { background: #252423; }
.rows .row:nth-child(even) i { border-color: #aaa; }
.rows .row:nth-child(even) span:not(:first-child) { border-right-color: transparent; }
.row.head { height: 46px; background: #e6e6e6; color: #252423; line-height: 34px; border-top: 1px solid #9a9db0; }
.row.head span, .row.head span:first-child { text-align: left; padding: 0 0 0 8px; height: 45px; border-right: 1px solid #c8c8c8; display: block; }
.row.head span.sorted { padding-left: 7px; }
.row.head span.sorted::after { content: ""; display: block; width: 0; border: 7px solid transparent; border-top-color: #252423; border-bottom: 0; margin-top: -3px; }
.total { font-weight: 700; }
.row.total span { color: #252423; }
.row.total span:first-child { padding-left: 38px; color: #fff; }
.vbar { width: 14px; height: 866px; border-radius: 7px; background: #8a8fa2; }
.vbar b { display: block; height: 337px; border-radius: 7px; background: #3c3f50; border: 1.500px solid #8a8fa2; }
.hbar { width: 1378px; height: 15px; border-radius: 7px; background: #8a8fa2; }
.hbar b { display: block; width: 1345px; height: 15px; border-radius: 7px; background: #3c3f50; border: 1.500px solid #6f7488; }

.filterpane { width: 82px; border-left: 2px solid #b3b0ad; }
.filterpane, .vizpane { flex: none; display: flex; flex-direction: column; align-items: flex-start; }
.filterpane span, .vizpane span { writing-mode: vertical-rl; font-weight: 600; line-height: 60px; font-size: 37.500px; white-space: nowrap; }
.filterpane span { margin: 5px 0 0 13px; letter-spacing: -1.050px; }

.pages { height: 87px; display: flex; font-size: 28px; }
.ptab { width: 226px; background: #fff; border-left: 2px solid #b3b0ad; text-align: center; line-height: 92px; }
.ptab.on { width: 184px; border-left-color: #c8c6c4; border-right: 2px solid #c8c6c4; border-bottom: 10px solid #117865; font-weight: 600; position: relative; }
.ptab b { position: absolute; right: 9px; top: 9px; font-size: 25px; line-height: 30px; }
.padd { width: 98px; height: 81px; margin-top: 3px; background: #117865; display: flex; align-items: center; justify-content: center; }

.vizpane { width: 87px; border-left: 2px solid #dddbd9; }
.vizpane span { margin: 0 0 0 12px; letter-spacing: .1px; }
.datapane { flex: 1; border-left: 2px solid #dddbd9; padding-left: 9px; }
.dtitle { display: flex; justify-content: space-between; height: 114px; padding: 23px 19px 0 10px; font-size: 36px; line-height: 54px; font-weight: 700; letter-spacing: -1px; }
.dtitle svg { margin-top: 9px; }
.search { width: 430px; height: 66px; border: 2px solid #7a7874; border-radius: 5px; display: flex; align-items: center; padding: 2px 0 0 17px; gap: 15px; font-size: 32.500px; color: #4a4846; margin-bottom: 23px; }
.search svg { margin-top: -3px; }
.field { height: 60px; display: flex; align-items: center; gap: 14px; padding-left: 13px; font-size: 28px; line-height: 40px; color: #323130; padding-top: 1px; }
.field svg { margin-top: -1px; }

/* status bar */
.status { height: 58px; display: flex; background: #f3f2f1; border-bottom: 2px solid #000; font-size: 28.500px; line-height: 58px; color: #484644; padding-left: 10px; }
.status > span:first-child { width: 2655px; }
.status .pct { width: 105px; padding-left: 0; margin-left: 25px; color: #605e5c; }

/* task bar */
.taskbar { height: 100px; display: flex; background: linear-gradient(90deg, #dadbe8 0, #d6deea 30%, #d5e1ea 50%, #d6dfe9 70%, #d5dde8 100%); color: #000; font-size: 27.500px; }
.find { width: 720px; border: 3px solid #c5c6ca; background: #fff; display: flex; align-items: center; padding-left: 27px; font-size: 34px; color: #222; }
.find span { margin: 3px 0 0 31px; width: 460px; }
.bird { margin: 0 21px 0 auto; }
.tray { margin-left: 740px; }
.lang { width: 92px; padding-left: 20px; line-height: 104px; white-space: nowrap; }
.clock { width: 177px; text-align: center; line-height: 46.500px; padding-top: 6px; }
.notion { font: 700 30px "Liberation Serif"; fill: #222; }
.count { font: 600 27px "Open Sans"; }
.pre { font: 700 13px "Open Sans"; }
```
